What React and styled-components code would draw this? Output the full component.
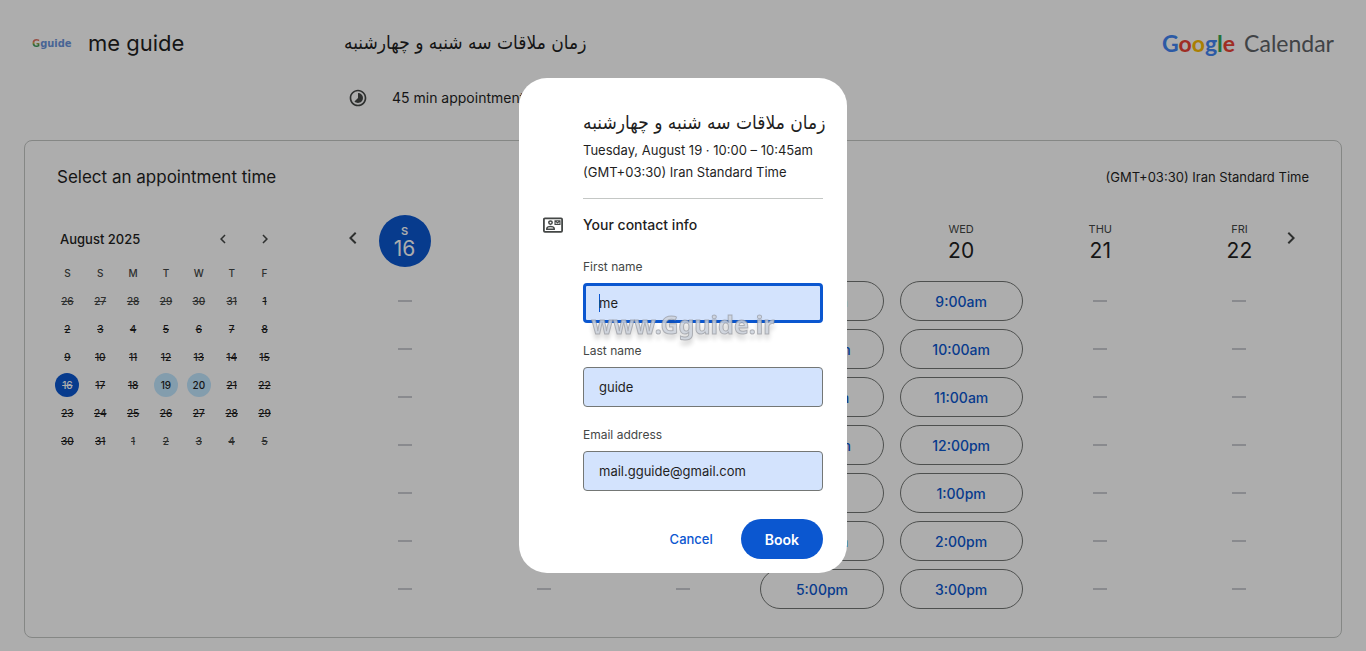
import React from "react";
import styled, { createGlobalStyle, css } from "styled-components";
import { MdTimelapse, MdChevronLeft, MdChevronRight } from "react-icons/md";

const GlobalStyle = createGlobalStyle`
  * {
    box-sizing: border-box;
  }
  body {
    margin: 0;
    background: #fff;
    color: #1f1f1f;
    font-family: Inter, "DejaVu Sans", sans-serif;
    font-size: 13px;
    line-height: 22px;
  }
  button,
  input {
    font-family: inherit;
  }
  h1, h2, h3, p {
    margin: 0;
    font-weight: 400;
  }
`;

const Header = styled.header`
  display: grid;
  grid-template-columns: 312px 1fr auto;
  align-items: start;
  padding: 29px 32px 32px;
`;

const Owner = styled.div`
  display: flex;
  align-items: center;
  height: 28px;
`;

const OwnerLogo = styled.span`
  width: 56px;
  color: #6a94dc;
  font: bold 11px "DejaVu Sans Condensed", "DejaVu Sans", sans-serif;
  span {
    background: linear-gradient(#e07060 35%, #d8b040 45%, #3f9a5a 60%);
    background-clip: text;
    color: transparent;
  }
`;

const OwnerName = styled.h1`
  font-size: 22px;
  line-height: 28px;
`;

const PersianTitle = styled.h2`
  margin-bottom: 2px;
  font-family: "DejaVu Sans Condensed", "DejaVu Sans", sans-serif;
  font-size: 19px;
  line-height: ${(props) => props.$lineHeight};
  white-space: nowrap;
`;

const Duration = styled.p`
  display: flex;
  align-items: center;
  gap: 24px;
  margin: 33px 0 0 4px;
  height: 20px;
  font-size: 14px;
  svg {
    color: #444746;
  }
`;

const Brand = styled.div`
  display: flex;
  gap: 9px;
  color: #5f6368;
  font-family: Lato, sans-serif;
  font-size: 23px;
  line-height: 28px;
`;

const Google = styled.span`
  font-weight: 700;
`;

const Letter = styled.span`
  color: ${(props) => props.$color};
`;

const Card = styled.main`
  margin: 0 24px 13px;
  border: 1px solid #c4c7c5;
  border-radius: 8px;
`;

const CardHeader = styled.div`
  display: flex;
  justify-content: space-between;
  align-items: center;
  padding: 24px 32px 0;
  h2 {
    font-size: 17px;
    line-height: 24px;
  }
`;

const CardBody = styled.div`
  display: flex;
  gap: 54px;
  padding: 26px 32px 28px 26px;
`;

const MiniCalendar = styled.section`
  width: 230px;
  padding-top: 12px;
`;

const MonthBar = styled.div`
  display: flex;
  align-items: center;
  gap: 10px;
  height: 24px;
  padding-left: 9px;
  margin-bottom: 8px;
  h3 {
    flex: 1;
    font-size: 13px;
    font-weight: 500;
  }
`;

const IconButton = styled.button`
  display: flex;
  align-items: center;
  justify-content: center;
  width: ${(props) => (props.$large ? "36px" : "32px")};
  height: ${(props) => (props.$large ? "46px" : "24px")};
  padding: 0;
  border: 0;
  background: none;
  color: #444746;
`;

const MonthTable = styled.table`
  width: 100%;
  table-layout: fixed;
  border-collapse: collapse;
  font-size: 10px;
  line-height: 24px;
  text-align: center;
  th,
  td {
    height: 28px;
    padding: 0;
  }
  th {
    color: #444746;
    font-weight: 500;
  }
`;

const Day = styled.span`
  display: block;
  width: 24px;
  height: 24px;
  margin: 0 auto;
  border-radius: 50%;
  font-weight: 500;
  text-decoration: ${(props) => (props.$open ? "none" : "line-through")};
  color: ${(props) => (props.$other ? "#444746" : "#1f1f1f")};
  ${(props) => props.$open && css`background: #c2e7ff;`}
  ${(props) => props.$today && css`background: #0b57d0; color: #fff;`}
`;

const Week = styled.section`
  flex: 1;
  display: grid;
  grid-template-columns: repeat(7, 1fr);
  grid-template-rows: 52px auto;
  row-gap: 14px;
`;

// the arrows share the first and the last cell of the heading row
const WeekArrow = styled.div`
  grid-row: 1;
  grid-column: ${(props) => props.$column};
  justify-self: ${(props) => props.$side};
`;

const DayHead = styled.div`
  grid-row: 1;
  grid-column: ${(props) => props.$column};
  justify-self: center;
  width: 52px;
  height: 52px;
  padding-top: 6px;
  border-radius: 50%;
  text-align: center;
  small {
    display: block;
    color: #444746;
    font-size: 11px;
    line-height: 16px;
  }
  span {
    display: block;
    font-size: 21px;
    line-height: 27px;
  }
  ${(props) =>
    props.$today &&
    css`
      background: #0b57d0;
      color: #fff;
      padding-top: 8px;
      small {
        color: #fff;
        font-weight: 600;
      }
      span {
        line-height: 20px;
      }
    `}
`;

const Slots = styled.div`
  grid-row: 2;
  display: flex;
  flex-direction: column;
  gap: 8px;
  padding: 0 8px;
`;

const Slot = styled.button`
  height: 40px;
  padding: 0;
  border: 1px solid #747775;
  border-radius: 20px;
  background: none;
  color: #0b57d0;
  font-size: 14px;
  font-weight: 500;
`;

const NoSlot = styled.div`
  display: flex;
  align-items: center;
  justify-content: center;
  height: 40px;
  &::after {
    content: "";
    width: 14px;
    height: 2px;
    background: #cbccd1;
  }
`;

const Overlay = styled.div`
  position: fixed;
  inset: 0;
  display: flex;
  align-items: center;
  justify-content: center;
  background: rgba(0, 0, 0, 0.32);
`;

const Dialog = styled.form`
  width: 328px;
  padding: 30px 24px 14px;
  border-radius: 28px;
  background: #fff;
`;

const Summary = styled.div`
  margin-left: 40px;
  padding-bottom: 15px;
  border-bottom: 1px solid #c4c7c5;
  white-space: nowrap;
`;

const SectionTitle = styled.div`
  display: flex;
  align-items: center;
  gap: 20px;
  margin-top: 14px;
  height: 24px;
  h3 {
    font-size: 14px;
    font-weight: 500;
  }
`;

const Fields = styled.div`
  display: flex;
  flex-direction: column;
  gap: 20px;
  margin: 22px 0 28px 40px;
`;

const Field = styled.label`
  display: flex;
  flex-direction: column;
  gap: 8px;
  color: #444746;
  font-size: 12px;
  line-height: 16px;
`;

const TextBox = styled.input`
  width: 100%;
  height: 40px;
  padding: 0 15px;
  border: 1px solid #747775;
  border-radius: 4px;
  outline: none;
  background: #d3e3fd;
  color: #1f1f1f;
  font-size: 13px;
  ${(props) =>
    props.$active &&
    css`
      padding: 0 13px;
      border: 3px solid #0b57d0;
      background: linear-gradient(#0b57d0, #0b57d0) 13px center / 1px 18px no-repeat #d3e3fd;
      caret-color: transparent;
    `}
`;

const Actions = styled.div`
  display: flex;
  justify-content: flex-end;
  gap: 16px;
`;

const Button = styled.button`
  height: 40px;
  padding: 0 ${(props) => (props.$filled ? "24px" : "12px")};
  border: 0;
  border-radius: 20px;
  background: ${(props) => (props.$filled ? "#0b57d0" : "none")};
  color: ${(props) => (props.$filled ? "#fff" : "#0b57d0")};
  font-size: ${(props) => (props.$filled ? "14px" : "13px")};
  font-weight: ${(props) => (props.$filled ? 600 : 500)};
`;

const Watermark = styled.div`
  position: fixed;
  inset: 0 0 4px;
  display: flex;
  align-items: center;
  justify-content: center;
  pointer-events: none;
  color: rgba(204, 210, 220, 0.85);
  font-family: "Noto Sans", sans-serif;
  font-size: 25px;
  font-weight: 700;
  -webkit-text-stroke: 1px rgba(140, 142, 148, 0.6);
  text-shadow: 0 5px 5px rgba(0, 0, 0, 0.2);
`;

const title = "زمان ملاقات سه شنبه و چهارشنبه";
const timezone = "(GMT+03:30) Iran Standard Time";

const googleLetters = [
  ["G", "#4285f4"],
  ["o", "#ea4335"],
  ["o", "#fbbc04"],
  ["g", "#4285f4"],
  ["l", "#34a853"],
  ["e", "#ea4335"],
];

const weekdays = ["S", "S", "M", "T", "W", "T", "F"];

const weeks = [
  [26, 27, 28, 29, 30, 31, 1],
  [2, 3, 4, 5, 6, 7, 8],
  [9, 10, 11, 12, 13, 14, 15],
  [16, 17, 18, 19, 20, 21, 22],
  [23, 24, 25, 26, 27, 28, 29],
  [30, 31, 1, 2, 3, 4, 5],
];

const none = Array(7).fill(null);

const days = [
  { name: "S", date: 16, slots: none, today: true },
  { name: "SUN", date: 17, slots: none },
  { name: "MON", date: 18, slots: none },
  {
    name: "TUE",
    date: 19,
    slots: ["9:00am", "10:00am", "11:00am", "12:00pm", "1:00pm", "4:00pm", "5:00pm"],
  },
  {
    name: "WED",
    date: 20,
    slots: ["9:00am", "10:00am", "11:00am", "12:00pm", "1:00pm", "2:00pm", "3:00pm"],
  },
  { name: "THU", date: 21, slots: none },
  { name: "FRI", date: 22, slots: none },
];

const isOtherMonth = (row, date) => (row === 0 && date > 7) || (row === 5 && date < 7);

const ContactIcon = () => (
  <svg width="20" height="16" viewBox="0 0 20 16" fill="none" stroke="#444746">
    <rect x="0.9" y="1.4" width="18.2" height="13.4" rx="1" strokeWidth="1.8" />
    <circle cx="7.5" cy="5.6" r="1.7" strokeWidth="1.5" />
    <path d="M3.8 12.2v-.6c0-1.4 2.4-2.1 3.7-2.1s3.7.7 3.7 2.1v.6z" strokeWidth="1.5" />
    <path d="M12 3.8h5v3.6h-5zM12.2 4l2.3 1.7L16.8 4" strokeWidth="1.1" />
  </svg>
);

const App = () => {
  return (
    <>
      <GlobalStyle />
      <Header>
        <Owner>
          <OwnerLogo>
            <span>G</span>guide
          </OwnerLogo>
          <OwnerName>me guide</OwnerName>
        </Owner>
        <div>
          <PersianTitle $lineHeight="26px">{title}</PersianTitle>
          <Duration>
            <MdTimelapse size={20} />
            45 min appointments
          </Duration>
        </div>
        <Brand>
          <Google>
            {googleLetters.map(([letter, color], i) => (
              <Letter key={i} $color={color}>{letter}</Letter>
            ))}
          </Google>
          <span>Calendar</span>
        </Brand>
      </Header>

      <Card>
        <CardHeader>
          <h2>Select an appointment time</h2>
          <p>{timezone}</p>
        </CardHeader>
        <CardBody>
          <MiniCalendar>
            <MonthBar>
              <h3>August 2025</h3>
              <IconButton type="button" aria-label="Previous month">
                <MdChevronLeft size={18} />
              </IconButton>
              <IconButton type="button" aria-label="Next month">
                <MdChevronRight size={18} />
              </IconButton>
            </MonthBar>
            <MonthTable>
              <thead>
                <tr>
                  {weekdays.map((day, i) => (
                    <th key={i}>{day}</th>
                  ))}
                </tr>
              </thead>
              <tbody>
                {weeks.map((week, row) => (
                  <tr key={row}>
                    {week.map((date) => (
                      <td key={date}>
                        <Day
                          $today={date === 16}
                          $open={row === 3 && (date === 19 || date === 20)}
                          $other={isOtherMonth(row, date)}
                        >
                          {date}
                        </Day>
                      </td>
                    ))}
                  </tr>
                ))}
              </tbody>
            </MonthTable>
          </MiniCalendar>

          <Week>
            {days.map((day, i) => (
              <DayHead key={day.date} $column={i + 1} $today={day.today}>
                <small>{day.name}</small>
                <span>{day.date}</span>
              </DayHead>
            ))}
            <WeekArrow $column={1} $side="start">
              <IconButton type="button" aria-label="Previous week" $large>
                <MdChevronLeft size={24} />
              </IconButton>
            </WeekArrow>
            <WeekArrow $column={7} $side="end">
              <IconButton type="button" aria-label="Next week" $large>
                <MdChevronRight size={24} />
              </IconButton>
            </WeekArrow>
            {days.map((day) => (
              <Slots key={day.date}>
                {day.slots.map((time, i) =>
                  time ? <Slot type="button" key={i}>{time}</Slot> : <NoSlot key={i} />
                )}
              </Slots>
            ))}
          </Week>
        </CardBody>
      </Card>

      <Overlay>
        <Dialog role="dialog" aria-label="Book appointment">
          <Summary>
            <PersianTitle $lineHeight="29px">{title}</PersianTitle>
            <p>Tuesday, August 19 · 10:00 – 10:45am</p>
            <p>{timezone}</p>
          </Summary>
          <SectionTitle>
            <ContactIcon />
            <h3>Your contact info</h3>
          </SectionTitle>
          <Fields>
            <Field>
              First name
              <TextBox type="text" defaultValue="me" $active />
            </Field>
            <Field>
              Last name
              <TextBox type="text" defaultValue="guide" />
            </Field>
            <Field>
              Email address
              <TextBox type="email" defaultValue="mail.gguide@gmail.com" />
            </Field>
          </Fields>
          <Actions>
            <Button type="button">Cancel</Button>
            <Button type="button" $filled>Book</Button>
          </Actions>
        </Dialog>
      </Overlay>
      <Watermark>www.Gguide.ir</Watermark>
    </>
  );
};

export default App;
